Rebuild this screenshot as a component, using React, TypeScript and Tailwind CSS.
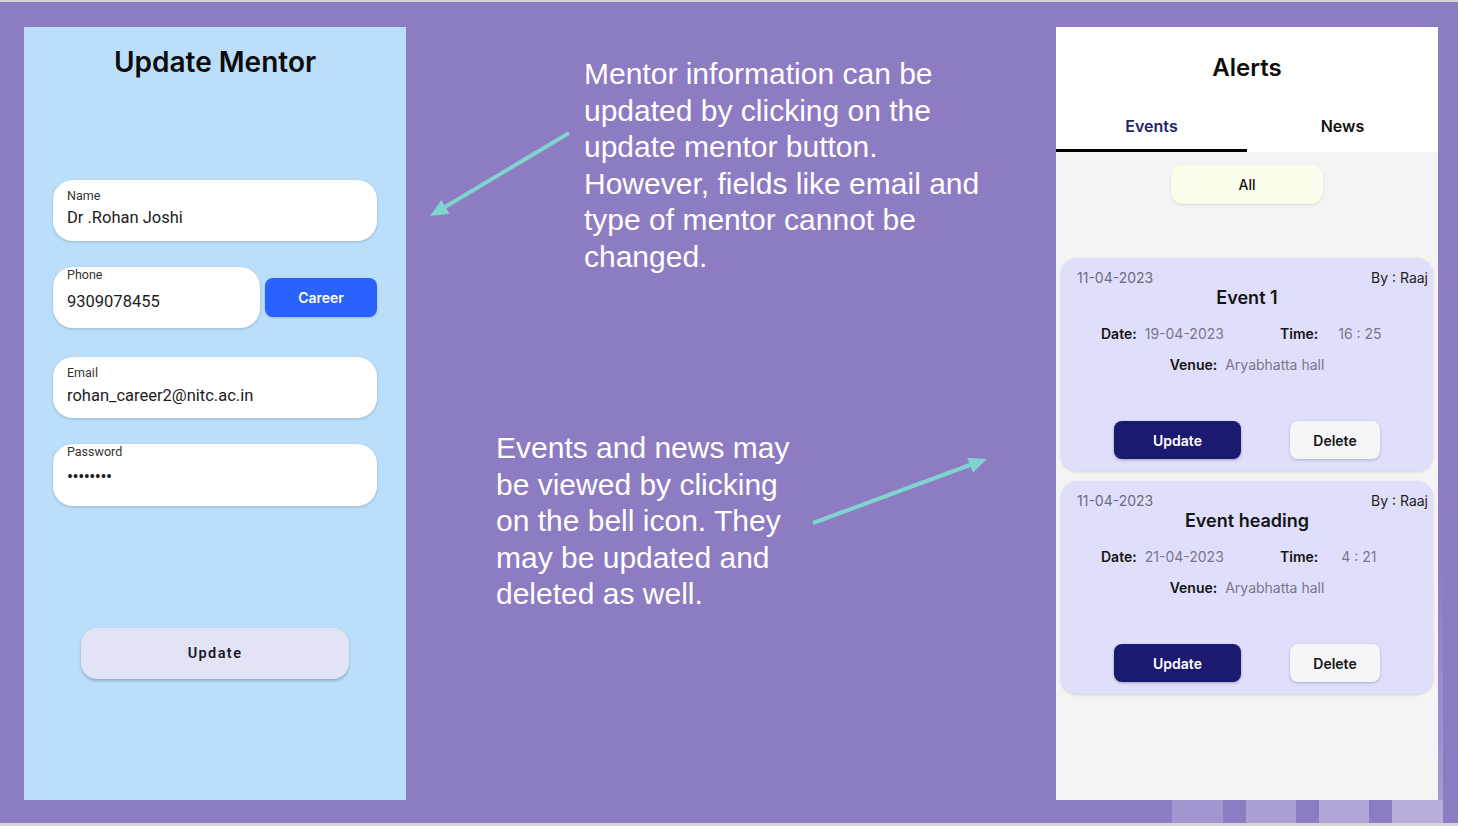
import React from 'react';

const inter = { fontFamily: 'Inter, "Noto Sans", sans-serif' };
const roboto = { fontFamily: 'Roboto, "Noto Sans", sans-serif' };

function Field({ label, value, top, gap }: { label: string; value: string; top: string; gap: string }) {
  return (
    <div className={`h-[61px] rounded-[20px] bg-white pl-[14px] shadow-[0_1px_3px_rgba(0,0,0,0.18)] ${top}`} style={roboto}>
      <div className="text-[12.5px] leading-4 text-[#333]">{label}</div>
      <div className={`text-[16.5px] leading-6 text-[#1c1c1c] ${gap}`}>{value}</div>
    </div>
  );
}

function EventCard({ title, date, time, timeGap }: { title: string; date: string; time: string; timeGap: string }) {
  return (
    <div className="rounded-2xl bg-[#dfdffb] pb-3 pl-4 pr-[5px] pt-[10px] shadow-[0_1px_3px_rgba(0,0,0,0.15)]" style={inter}>
      <div className="flex justify-between text-[14px] leading-5">
        <span className="text-[#6b6b7d]">11-04-2023</span>
        <span className="text-[#222]">By : Raaj</span>
      </div>
      <div className="pr-[11px] text-center text-[18px] font-semibold leading-5 text-[#141414]">{title}</div>
      <div className="mt-4 flex pl-[24px] text-[14px] leading-5">
        <div className="flex w-[179px] gap-2">
          <span className="font-semibold text-[#141414]">Date:</span>
          <span className="text-[#77778a]">{date}</span>
        </div>
        <div className={`flex ${timeGap}`}>
          <span className="font-semibold text-[#141414]">Time:</span>
          <span className="text-[#77778a]">{time}</span>
        </div>
      </div>
      <div className="mt-[11px] flex justify-center gap-2 pr-[11px] text-[14px] leading-5">
        <span className="font-semibold text-[#141414]">Venue:</span>
        <span className="text-[#77778a]">Aryabhatta hall</span>
      </div>
      <div className="mt-[46px] flex justify-center gap-[49px] pr-[11px]">
        <button className="h-[38px] w-[127px] rounded-lg bg-[#1b1a70] text-[14px] font-semibold text-white shadow-[0_1px_3px_rgba(0,0,0,0.3)]">
          Update
        </button>
        <button className="h-[38px] w-[90px] rounded-lg bg-[#f6f6f8] text-[14px] font-semibold text-[#141414] shadow-[0_1px_3px_rgba(0,0,0,0.22)]">
          Delete
        </button>
      </div>
    </div>
  );
}

export default function App() {
  return (
    <div className="relative h-[826px] w-[1458px] overflow-hidden border-b-[3px] border-t-2 border-[#d6d6d8] bg-[#8d7cc2]">
      <div className="flex pl-6 pt-[25px]">
        {/* Update mentor screen */}
        <div className="h-[773px] w-[382px] bg-[#bbdefa] px-[29px] pt-[17px]">
          <h1 className="text-center text-[28px] font-semibold leading-9 text-[#0d0d0d]" style={inter}>
            Update Mentor
          </h1>
          <Field label="Name" value="Dr .Rohan Joshi" top="mt-[100px] pt-2" gap="mt-[2px]" />
          <div className="mt-[26px] flex items-center gap-[5px]">
            <div className="h-[61px] w-[207px] rounded-[20px] bg-white pl-[14px] shadow-[0_1px_3px_rgba(0,0,0,0.18)]" style={roboto}>
              <div className="text-[12.5px] leading-4 text-[#333]">Phone</div>
              <div className="mt-[7px] text-[16.5px] leading-6 text-[#1c1c1c]">9309078455</div>
            </div>
            <button className="h-[39px] flex-1 rounded-lg bg-[#2962ff] text-[14px] font-semibold text-white shadow-[0_1px_2px_rgba(0,0,0,0.2)]" style={inter}>
              Career
            </button>
          </div>
          <Field label="Email" value="rohan_career2@nitc.ac.in" top="mt-[29px] pt-2" gap="mt-[3px]" />
          <div className="mt-[26px] h-[62px] rounded-[20px] bg-white pl-[14px] shadow-[0_1px_3px_rgba(0,0,0,0.18)]" style={roboto}>
            <div className="text-[12.5px] leading-4 text-[#333]">Password</div>
            <div className="mt-[5px] text-[18px] leading-6 tracking-[-0.5px] text-[#1c1c1c]">••••••••</div>
          </div>
          <div className="mt-[122px] flex justify-center">
            <button className="h-[51px] w-[268px] rounded-2xl bg-[#e3e3f7] text-[14.5px] font-semibold tracking-[1.4px] text-[#1a1a2a] shadow-[0_2px_3px_rgba(0,0,0,0.22)]" style={roboto}>
              Update
            </button>
          </div>
        </div>

        {/* Annotations */}
        <div className="w-[650px] text-[30px] leading-[36.5px] text-white" style={{ fontFamily: '"Liberation Sans", Arial, sans-serif' }}>
          <p className="ml-[178px] mt-[29px]">
            Mentor information can be
            <br />
            updated by clicking on the
            <br />
            update mentor button.
            <br />
            However, fields like email and
            <br />
            type of mentor cannot be
            <br />
            changed.
          </p>
          <p className="ml-[90px] mt-[155px]">
            Events and news may
            <br />
            be viewed by clicking
            <br />
            on the bell icon. They
            <br />
            may be updated and
            <br />
            deleted as well.
          </p>
        </div>

        {/* Alerts screen */}
        <div className="flex h-[773px] w-[382px] flex-col bg-[#f4f4f4]" style={inter}>
          <div className="bg-white pt-[25px]">
            <h2 className="text-center text-[24px] font-semibold leading-8 text-[#0d0d0d]">Alerts</h2>
            <div className="mt-5 flex">
              <div className="flex h-12 flex-1 items-center justify-center border-b-[3px] border-black pb-[1px] text-[16px] font-semibold text-[#22226b]">
                Events
              </div>
              <div className="flex h-12 flex-1 items-center justify-center pb-[4px] text-[16px] font-semibold text-[#111]">
                News
              </div>
            </div>
          </div>
          <div className="mt-[13px] flex justify-center">
            <div className="flex h-[39px] w-[152px] items-center justify-center rounded-xl bg-[#fdfdee] text-[14px] font-medium text-[#141414] shadow-[0_1px_2px_rgba(0,0,0,0.12)]">
              All
            </div>
          </div>
          <div className="mt-[54px] flex flex-col gap-[10px] px-[5px]">
            <EventCard title="Event 1" date="19-04-2023" time="16 : 25" timeGap="gap-[20px]" />
            <EventCard title="Event heading" date="21-04-2023" time="4 : 21" timeGap="gap-[23px]" />
          </div>
        </div>
      </div>

      {/* Decorative bottom blocks */}
      <div className="flex h-[23px] pl-[1172px]">
        <div className="w-[51px] bg-[#a595cf]" />
        <div className="ml-[23px] w-[50px] bg-[#ab9fd3]" />
        <div className="ml-[23px] w-[50px] bg-[#b2a6d7]" />
        <div className="ml-[23px] w-[51px] bg-[#b9addc]" />
      </div>
      <div className="absolute left-[1438px] top-[558px] h-[240px] w-[5px] bg-gradient-to-b from-[#8d7cc2] to-[#a699d0]" />

      {/* Arrows */}
      <svg className="pointer-events-none absolute left-0 top-0" width="1458" height="826" viewBox="0 -2 1458 826">
        <line x1="569" y1="129" x2="445" y2="203" stroke="#80d4cf" strokeWidth="4" />
        <polygon points="430,212 449.5,209.7 441.3,195.9" fill="#80d4cf" />
        <line x1="813" y1="519" x2="970" y2="461" stroke="#80d4cf" strokeWidth="4" />
        <polygon points="987,455 972.9,468.7 967.3,453.7" fill="#80d4cf" />
      </svg>
    </div>
  );
}
